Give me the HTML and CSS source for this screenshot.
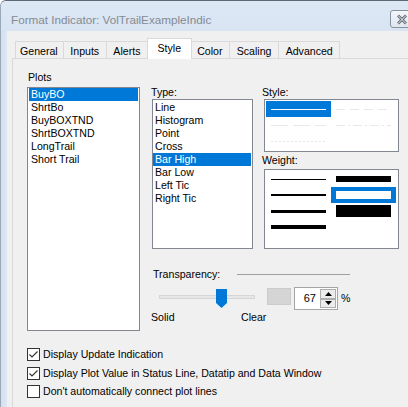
FILE: index.html
```html
<!DOCTYPE html>
<html>
<head>
<meta charset="utf-8">
<link rel="stylesheet" href="styles.css">
</head>
<body>
<div class="window">
  <div class="titlebar">
    <span class="title">Format Indicator: VolTrailExampleIndic</span>
    <div class="close">
      <svg width="14" height="11" viewBox="0 0 14 11"><path d="M3 1.5 L11 9.5 M11 1.5 L3 9.5" stroke="#5b6470" stroke-width="2.6" fill="none"/><path d="M3 1.5 L11 9.5 M11 1.5 L3 9.5" stroke="#f4f6f8" stroke-width="1" fill="none"/></svg>
    </div>
  </div>
  <div class="frame">
    <div class="edge"></div>
    <div class="client">
      <div class="tabs">
        <div class="tab first">General</div>
        <div class="tab">Inputs</div>
        <div class="tab">Alerts</div>
        <div class="tab active">Style</div>
        <div class="tab">Color</div>
        <div class="tab">Scaling</div>
        <div class="tab">Advanced</div>
      </div>
      <div class="panel">
        <div class="main">
          <div class="plots-col">
            <div class="label plots-label">Plots</div>
            <div class="listbox plots-box">
              <div class="item sel">BuyBO</div>
              <div class="item">ShrtBo</div>
              <div class="item">BuyBOXTND</div>
              <div class="item">ShrtBOXTND</div>
              <div class="item">LongTrail</div>
              <div class="item">Short Trail</div>
            </div>
          </div>
          <div class="right">
            <div class="lists">
              <div class="type-col">
                <div class="label">Type:</div>
                <div class="listbox type-box">
                  <div class="item">Line</div>
                  <div class="item">Histogram</div>
                  <div class="item">Point</div>
                  <div class="item">Cross</div>
                  <div class="item sel">Bar High</div>
                  <div class="item">Bar Low</div>
                  <div class="item">Left Tic</div>
                  <div class="item">Right Tic</div>
                </div>
              </div>
              <div class="style-col">
                <div class="label">Style:</div>
                <div class="listbox grid-box style-box">
                  <div class="cell sel"><div class="ln solid-white"></div></div>
                  <div class="cell"><div class="ln dash"></div></div>
                  <div class="cell"><div class="ln longdash"></div></div>
                  <div class="cell"><div class="ln dashdot"></div></div>
                  <div class="cell"><div class="ln dots"></div></div>
                  <div class="cell"></div>
                </div>
                <div class="label weight-label">Weight:</div>
                <div class="listbox grid-box weight-box">
                  <div class="cell"><div class="ln w1"></div></div>
                  <div class="cell"><div class="ln w6"></div></div>
                  <div class="cell"><div class="ln w2"></div></div>
                  <div class="cell sel"><div class="ln w8"></div></div>
                  <div class="cell"><div class="ln w3"></div></div>
                  <div class="cell"><div class="ln w12"></div></div>
                  <div class="cell"><div class="ln w4"></div></div>
                  <div class="cell"></div>
                </div>
              </div>
            </div>
            <div class="transparency">
              <div class="trans-head">
                <span class="trans-label">Transparency:</span>
                <div class="trans-line"></div>
              </div>
              <div class="slider-row">
                <div class="slider">
                  <div class="track"></div>
                  <svg class="thumb" width="11" height="19" viewBox="0 0 11 19"><path d="M0 0 H11 V14 L5.5 19 L0 14 Z" fill="#0078d7"/></svg>
                </div>
                <div class="swatch"></div>
                <div class="spin">
                  <div class="spin-val">67</div>
                  <div class="spin-btns">
                    <div class="spin-btn"><svg width="7" height="4" viewBox="0 0 7 4"><path d="M0 4 L3.5 0 L7 4 Z" fill="#000"/></svg></div>
                    <div class="spin-btn"><svg width="7" height="4" viewBox="0 0 7 4"><path d="M0 0 L3.5 4 L7 0 Z" fill="#000"/></svg></div>
                  </div>
                </div>
                <span class="pct">%</span>
              </div>
              <div class="ends">
                <span class="solid">Solid</span>
                <span>Clear</span>
              </div>
            </div>
          </div>
        </div>
        <div class="checks">
          <div class="check"><span class="box"><svg width="11" height="11" viewBox="0 0 11 11"><path d="M1.5 5.5 L4 8 L9.5 2.5" stroke="#333" stroke-width="1.1" fill="none"/></svg></span><span>Display Update Indication</span></div>
          <div class="check"><span class="box"><svg width="11" height="11" viewBox="0 0 11 11"><path d="M1.5 5.5 L4 8 L9.5 2.5" stroke="#333" stroke-width="1.1" fill="none"/></svg></span><span>Display Plot Value in Status Line, Datatip and Data Window</span></div>
          <div class="check"><span class="box"></span><span>Don't automatically connect plot lines</span></div>
        </div>
      </div>
    </div>
  </div>
</div>
</body>
</html>
```
FILE: styles.css
```css
* { box-sizing: border-box; }
html, body { margin: 0; padding: 0; }
body {
  width: 408px;
  height: 407px;
  overflow: hidden;
  background: #ffffff;
  font-family: "Liberation Sans", Arial, sans-serif;
  font-size: 10.6px;
  color: #000;
}
.window {
  width: 408px;
  height: 407px;
  display: flex;
  flex-direction: column;
  background: #dbe6f4;
  border-top: 1px solid #5e6874;
  border-left: 1px solid #9aa7b6;
  border-top-left-radius: 6px;
  overflow: hidden;
}
.titlebar {
  height: 30px;
  flex: none;
  display: flex;
  align-items: flex-start;
  background: linear-gradient(#dde8f5, #d8e4f2);
}
.title {
  margin-left: 10px;
  margin-top: 12px;
  font-size: 11.7px;
  line-height: 14px;
  color: #858b92;
}
.close {
  margin-left: auto;
  margin-right: -12px;
  margin-top: 9px;
  width: 30px;
  height: 18px;
  border: 1px solid #8792a0;
  border-radius: 3px;
  background: linear-gradient(#f4f7fa, #dfe6ee);
  display: flex;
  align-items: center;
  padding-left: 4px;
}
.frame {
  flex: 1;
  display: flex;
}
.edge {
  width: 6px;
  flex: none;
  background: linear-gradient(90deg, #d3e0f0, #dde8f5);
}
.client {
  flex: 1;
  background: #f0f0f0;
  padding-top: 7px;
  display: flex;
  flex-direction: column;
}
.tabs {
  display: flex;
  align-items: flex-end;
  height: 21px;
  padding-left: 8px;
}
.tab {
  height: 18px;
  padding: 0 6.6px;
  border: 1px solid #d9d9d9;
  border-bottom: none;
  margin-left: -1px;
  display: flex;
  align-items: center;
  background: #f0f0f0;
  white-space: nowrap;
}
.tab.first { margin-left: 0; padding: 0 5px 0 4px; }
.tab.active {
  height: 21px;
  background: #ffffff;
  padding: 0 9.5px 2px 9.5px;
  margin: 0 -1px 0 -1px;
  position: relative;
  z-index: 1;
}
.panel {
  flex: 1;
  margin-left: 5px;
  margin-top: -1px;
  border-top: 1px solid #d9d9d9;
  border-left: 1px solid #d9d9d9;
  background: #f0f0f0;
  padding: 12px 0 0 14px;
}
.main { display: flex; }
.label { line-height: 13px; height: 13px; white-space: nowrap; }
.plots-col { width: 113px; flex: none; }
.plots-label { padding-left: 1px; }
.listbox {
  background: #ffffff;
  border: 1px solid #828790;
}
.plots-box {
  margin-top: 3px;
  height: 244px;
  padding: 0 1px;
}
.item {
  height: 13px;
  line-height: 13px;
  padding-left: 2px;
  white-space: nowrap;
}
.item.sel { background: #0078d7; color: #ffffff; }
.right { margin-left: 11px; margin-top: 15px; }
.lists { display: flex; }
.type-col { width: 102px; flex: none; }
.type-box {
  margin-left: 1px;
  width: 101px;
  height: 150px;
  padding: 1px 1px 0 0;
}
.style-col { margin-left: 9px; }
.style-col > .label { padding-left: 0; }
.grid-box {
  margin-left: 2px;
  width: 135px;
  padding: 1px;
  display: grid;
  grid-template-columns: 65px 65px;
  grid-auto-rows: 16px;
}
.style-box { height: 53px; margin-top: 0; }
.weight-label { margin-top: 2px; }
.weight-box { height: 80px; margin-top: 2px; }
.cell {
  display: flex;
  align-items: center;
  justify-content: center;
}
.cell.sel { background: #0078d7; }
.ln { width: 55px; }
.solid-white { height: 1px; background: #ffffff; }
.dash { height: 1px; background: repeating-linear-gradient(90deg, #e8e8e8 0 9px, transparent 9px 14px); }
.longdash { height: 1px; background: repeating-linear-gradient(90deg, #e8e8e8 0 17px, transparent 17px 22px); }
.dashdot { height: 1px; background: repeating-linear-gradient(90deg, #e8e8e8 0 9px, transparent 9px 12px, #e8e8e8 12px 14px, transparent 14px 17px); }
.dots { height: 1px; background: repeating-linear-gradient(90deg, #e8e8e8 0 2px, transparent 2px 4px); }
.w1 { height: 1px; background: #000; }
.w2 { height: 2px; background: #000; }
.w3 { height: 3px; background: #000; }
.w4 { height: 4px; background: #000; }
.w6 { height: 6px; background: #000; }
.w8 { height: 8px; background: #ffffff; }
.w12 { height: 12px; background: #000; }
.transparency { margin-top: 19px; }
.trans-head { display: flex; align-items: center; height: 13px; }
.trans-label { width: 86px; padding-left: 2px; line-height: 13px; white-space: nowrap; }
.trans-line { width: 113px; height: 1px; background: #a0a0a0; }
.slider-row {
  margin-top: 6px;
  height: 23px;
  display: flex;
  align-items: flex-start;
}
.slider {
  position: relative;
  margin-left: 2px;
  width: 104px;
  height: 22px;
  padding: 8px 2px 0 6px;
}
.track {
  height: 4px;
  background: #e7e7e7;
  border: 1px solid #d6d6d6;
}
.thumb { position: absolute; left: 63px; top: 2px; }
.swatch {
  margin-left: 10px;
  margin-top: 1px;
  width: 24px;
  height: 17px;
  background: #d5d5d5;
  border: 1px solid #cbcbcb;
}
.spin {
  margin-left: 3px;
  width: 44px;
  height: 23px;
  border: 1px solid #a6a6a6;
  background: #ffffff;
  display: flex;
}
.spin-val {
  flex: 1;
  text-align: right;
  padding-right: 4px;
  line-height: 21px;
  font-size: 11px;
}
.spin-btns {
  width: 17px;
  display: flex;
  flex-direction: column;
  padding: 1px 1px 1px 0;
}
.spin-btn {
  flex: 1;
  border: 1px solid #adadad;
  background: #ececec;
  display: flex;
  align-items: center;
  justify-content: center;
}
.pct { margin-left: 3px; line-height: 23px; }
.ends { margin-top: 1px; display: flex; line-height: 13px; }
.solid { width: 90px; }
.checks { margin-top: 17px; }
.check {
  height: 18.5px;
  display: flex;
  align-items: flex-start;
  line-height: 13px;
  white-space: nowrap;
}
.box {
  width: 13px;
  height: 13px;
  flex: none;
  border: 1px solid #333333;
  background: #ffffff;
  margin-right: 3px;
  display: flex;
  align-items: center;
  justify-content: center;
}
```
